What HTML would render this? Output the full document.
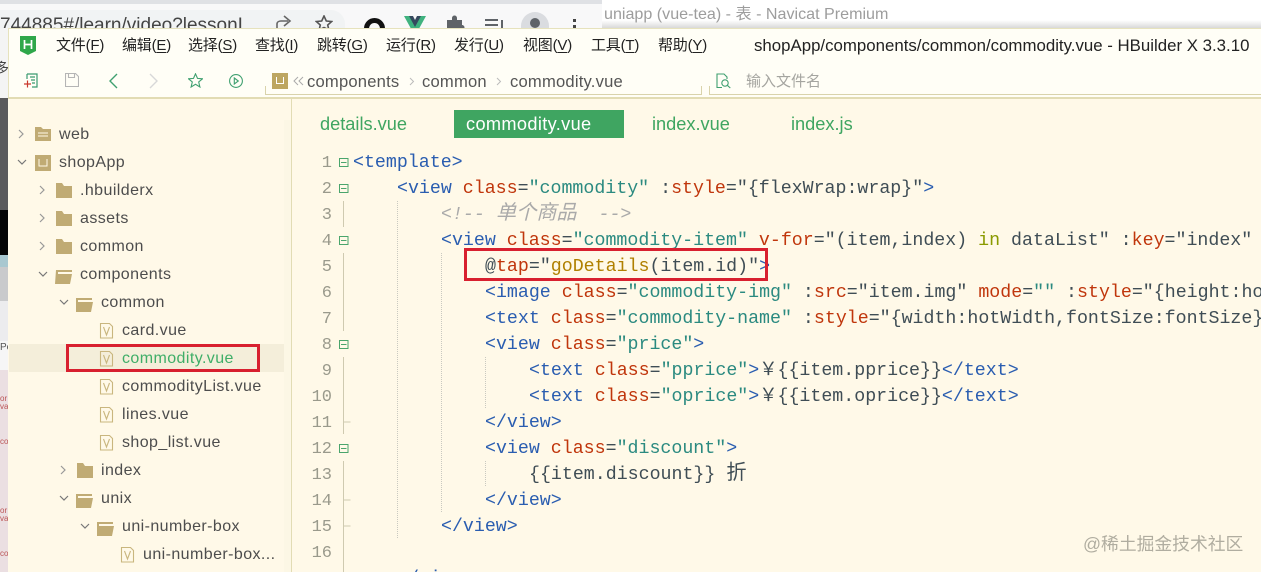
<!DOCTYPE html>
<html><head><meta charset="utf-8">
<style>
html,body{margin:0;padding:0;overflow:hidden;width:1261px;height:572px}
#p{position:relative;width:1261px;height:572px;overflow:hidden;background:#fff9e8;font-family:"Liberation Sans","Noto Sans CJK SC",sans-serif}
.a{position:absolute;white-space:pre}
.r{position:absolute}
.m{position:absolute;top:36px;font-size:15px;line-height:20px;color:#222;white-space:pre;letter-spacing:-.2px}
.m u{text-underline-offset:2px}
.t{position:absolute;font-size:16px;line-height:28px;height:28px;color:#4d4d4d;letter-spacing:.42px;white-space:pre}
.c{position:absolute;font-family:"Liberation Mono","Noto Sans CJK SC",monospace;font-size:18.28px;line-height:26px;height:26px;color:#3f4d55;white-space:pre}
.c b{font-weight:400;font-size:20.2px;line-height:20px}
.n{position:absolute;left:300px;width:32px;text-align:right;font-family:"Liberation Mono",monospace;font-size:17px;line-height:26px;color:#9a9a8c}
.g{color:#2a5db0}.e{color:#c0360c}.s{color:#2b8a80}.o{color:#b08000}.k{color:#8a9a00}.q{color:#aaa;font-style:italic}
svg{position:absolute}
.bc{position:absolute;top:72px;font-size:16.6px;line-height:20px;color:#555;letter-spacing:.2px;white-space:pre}
.tb{position:absolute;top:112px;font-size:18.2px;line-height:24px;color:#3fa561;white-space:pre}
</style></head><body><div id="p">

<!-- background windows -->
<div class="r" style="left:0;top:0;width:602px;height:28px;background:#f8f8f9"></div>
<div class="r" style="left:0;top:0;width:602px;height:4px;background:#dfe1e5"></div>
<div class="r" style="left:0;top:10px;width:345px;height:18px;background:#f1f3f4;border-radius:0 14px 0 0"></div>
<div class="r" style="left:602px;top:0;width:659px;height:28px;background:linear-gradient(#fff 0,#fff 72%,#d9d9d9 100%)"></div>
<div class="a" style="left:0;top:14px;width:260px;height:14px;overflow:hidden;font-size:19px;line-height:24px;color:#444">744885#/learn/video?lessonI</div>
<div class="a" style="left:604px;top:4px;font-size:16.1px;line-height:20px;color:#9d9d9d">uniapp (vue-tea) - 表 - Navicat Premium</div>
<svg style="left:274px;top:15px" width="20" height="13" viewBox="0 0 20 13" fill="none" stroke="#666" stroke-width="1.6"><path d="M3 14V9c0-2 2-3 4-3h7M10 1l6 5-6 5"/></svg>
<svg style="left:315px;top:15px" width="18" height="13" viewBox="0 0 18 13" fill="none" stroke="#555" stroke-width="1.6"><path d="M9 1l2.3 5 5.4.5-4 3.500 1.200 5L9 12.500 4.100 15l1.200-5-4-3.500L6.700 6z"/></svg>
<div class="r" style="left:364px;top:18px;width:21px;height:10px;overflow:hidden"><div style="width:21px;height:21px;border:5px solid #111;border-radius:50%;box-sizing:border-box"></div></div>
<svg style="left:404px;top:16px" width="22" height="12" viewBox="0 0 22 12"><path d="M0 0h6l5 9 5-9h6L11 20z" fill="#3fb27f"/><path d="M5 0h4l2 4 2-4h4l-6 11z" fill="#35495e"/></svg>
<svg style="left:445px;top:15px" width="20" height="13" viewBox="0 0 20 13"><path d="M2 5h5V3a2.500 2.500 0 0 1 5 0v2h5v5a2.500 2.500 0 0 1 0 5v5H2z" fill="#5f6368"/></svg>
<svg style="left:485px;top:18px" width="20" height="10" viewBox="0 0 20 10" stroke="#5f6368" stroke-width="2"><path d="M0 2h13M0 7h13M0 12h9M17 2v11"/></svg>
<div class="r" style="left:521px;top:12px;width:28px;height:16px;border-radius:14px 14px 0 0;background:#dadce0"></div>
<div class="r" style="left:530px;top:18px;width:10px;height:10px;border-radius:5px;background:#5f6368"></div>
<div class="r" style="left:573px;top:19px;width:3px;height:3px;background:#444;box-shadow:0 6px 0 #444"></div>

<!-- left strip -->
<div class="r" style="left:0;top:28px;width:9px;height:70px;background:#f4f4f4"></div>
<div class="a" style="left:0;top:58px;width:9px;overflow:hidden;font-size:14px;line-height:20px;color:#444;direction:rtl">多</div>
<div class="r" style="left:0;top:98px;width:9px;height:112px;background:#5a5a5c"></div>
<div class="r" style="left:0;top:210px;width:9px;height:45px;background:#050505"></div>
<div class="r" style="left:0;top:255px;width:9px;height:12px;background:#a9c8d0"></div>
<div class="r" style="left:0;top:267px;width:9px;height:34px;background:#c9cacc"></div>
<div class="r" style="left:0;top:301px;width:9px;height:40px;background:#ececee"></div>
<div class="r" style="left:0;top:341px;width:9px;height:29px;background:#f6f6f6"></div>
<div class="r" style="left:0;top:370px;width:9px;height:202px;background:#ebdfe2"></div>
<div class="a" style="left:0;top:341px;width:9px;overflow:hidden;font-size:10px;line-height:14px;color:#555">Pe</div>
<div class="a" style="left:0;top:395px;width:9px;overflow:hidden;font-size:8px;line-height:8px;color:#b55">or
va</div>
<div class="a" style="left:0;top:438px;width:9px;overflow:hidden;font-size:8px;line-height:8px;color:#b55">co</div>
<div class="a" style="left:0;top:507px;width:9px;overflow:hidden;font-size:8px;line-height:8px;color:#b55">or
va</div>
<div class="a" style="left:0;top:550px;width:9px;overflow:hidden;font-size:8px;line-height:8px;color:#b55">co</div>

<!-- window -->
<div class="r" style="left:8px;top:28px;width:1253px;height:70px;background:#fffef6;border-top:1px solid #e6e2bd;box-sizing:border-box;border-left:1px solid #e6e2bd"></div>
<div class="r" style="left:8px;top:98px;width:1253px;height:474px;background:#fff9e8"></div>
<div class="r" style="left:8px;top:97px;width:1253px;height:2px;background:#e2dcb4"></div>
<div class="r" style="left:291px;top:99px;width:1px;height:473px;background:#e2dcb4"></div>
<div class="r" style="left:284px;top:120px;width:7px;height:452px;background:#fcf7e5"></div>
<div class="r" style="left:265px;top:94px;width:436px;height:1px;background:#d9d3ab"></div>
<div class="r" style="left:265px;top:86px;width:1px;height:9px;background:#d9d3ab"></div>
<div class="r" style="left:701px;top:86px;width:1px;height:9px;background:#d9d3ab"></div>
<div class="r" style="left:709px;top:94px;width:552px;height:1px;background:#d9d3ab"></div>
<div class="r" style="left:709px;top:86px;width:1px;height:9px;background:#d9d3ab"></div>

<!-- logo -->
<svg style="left:20px;top:36px" width="16" height="20" viewBox="0 0 16 20"><path d="M0 0h16v15l-8 4-8-4z" fill="#2fa74a"/><path d="M4.500 4v9M11.500 4v9M4.500 8.500h7" stroke="#fff" stroke-width="1.700" fill="none"/></svg>

<!-- menu -->
<div class="m" style="left:56px">文件(<u>F</u>)</div>
<div class="m" style="left:122px">编辑(<u>E</u>)</div>
<div class="m" style="left:188px">选择(<u>S</u>)</div>
<div class="m" style="left:255px">查找(<u>I</u>)</div>
<div class="m" style="left:317px">跳转(<u>G</u>)</div>
<div class="m" style="left:386px">运行(<u>R</u>)</div>
<div class="m" style="left:454px">发行(<u>U</u>)</div>
<div class="m" style="left:523px">视图(<u>V</u>)</div>
<div class="m" style="left:591px">工具(<u>T</u>)</div>
<div class="m" style="left:658px">帮助(<u>Y</u>)</div>
<div class="a" style="left:754px;top:36px;font-size:16.83px;line-height:20px;color:#222">shopApp/components/common/commodity.vue - HBuilder X 3.3.10</div>

<!-- toolbar icons -->
<svg style="left:23px;top:73px" width="16" height="16" viewBox="0 0 16 16" fill="none" stroke="#3a9a70" stroke-width="1.200"><path d="M4 1h10v13H9M4 1v5M7 4h5M8 7h4M9 10h3"/><path d="M1 11h7M4.500 7.500v7" stroke="#c9382c"/></svg>
<svg style="left:65px;top:73px" width="14" height="14" viewBox="0 0 14 14" fill="none" stroke="#b5b5b5" stroke-width="1.100"><path d="M.5.500h10l3 3v10H.5zM3.500.5v4h6v-4"/></svg>
<svg style="left:108px;top:73px" width="10" height="16" viewBox="0 0 10 16" fill="none" stroke="#3fa070" stroke-width="1.400"><path d="M9 1L2 8l7 7"/></svg>
<svg style="left:149px;top:73px" width="10" height="16" viewBox="0 0 10 16" fill="none" stroke="#d8d8d8" stroke-width="1.400"><path d="M1 1l7 7-7 7"/></svg>
<svg style="left:188px;top:73px" width="15" height="15" viewBox="0 0 15 15" fill="none" stroke="#3fa070" stroke-width="1.100"><path d="M7.500 .8l2 4.600 5 .4-3.800 3.200 1.200 5-4.400-2.700L3.100 14l1.200-5L.5 5.800l5-.4z"/></svg>
<svg style="left:229px;top:74px" width="14" height="14" viewBox="0 0 14 14" fill="none" stroke="#3fa070" stroke-width="1.100"><circle cx="7" cy="7" r="6.400"/><path d="M5.300 4l4 3-4 3z"/></svg>

<!-- breadcrumb -->
<div class="r" style="left:272px;top:73px;width:16px;height:16px;background:#bda661"></div>
<div class="r" style="left:276px;top:77px;width:8px;height:7px;border:1px solid #fff;border-top:0;box-sizing:border-box"></div>
<svg style="left:293px;top:76px" width="12" height="10" viewBox="0 0 12 10" fill="none" stroke="#aaa" stroke-width="1"><path d="M5 1L1 5l4 4M10 1L6 5l4 4"/></svg>
<div class="bc" style="left:307px">components</div>
<svg style="left:409px;top:77px" width="6" height="9" viewBox="0 0 6 9" fill="none" stroke="#bbb"><path d="M1 1l3.500 3.500L1 8"/></svg>
<div class="bc" style="left:422px">common</div>
<svg style="left:496px;top:77px" width="6" height="9" viewBox="0 0 6 9" fill="none" stroke="#bbb"><path d="M1 1l3.500 3.500L1 8"/></svg>
<div class="bc" style="left:510px">commodity.vue</div>
<svg style="left:716px;top:73px" width="16" height="16" viewBox="0 0 16 16" fill="none" stroke="#3fa070" stroke-width="1.100"><path d="M6 14.500H1V1h7l3 3v2"/><circle cx="9" cy="10" r="3.200"/><path d="M11.300 12.300l3 2.700"/></svg>
<div class="a" style="left:746px;top:72px;font-size:15px;line-height:20px;color:#a5a5a0">输入文件名</div>

<!-- sidebar selection -->
<div class="r" style="left:9px;top:344px;width:275px;height:28px;background:#f4eeda"></div>

<!-- tree arrows -->
<svg style="left:0;top:0" width="291" height="572" viewBox="0 0 291 572" fill="none" stroke="#777" stroke-width="1.200">
<path d="M19 130l4 4-4 4M40 186l4 4-4 4M40 214l4 4-4 4M40 242l4 4-4 4M61 466l4 4-4 4" stroke="#999"/>
<path d="M18 160l4 4 4-4M39 272l4 4 4-4M60 300l4 4 4-4M60 496l4 4 4-4M81 524l4 4 4-4"/>
</svg>
<!-- tree icons -->
<svg style="left:0;top:0" width="291" height="572" viewBox="0 0 291 572">
<g fill="#c0ab74">
<path d="M35 127h6l2 2h8v12H35z"/>
<path d="M35 155h16v16H35z"/>
<path d="M56 183h6l2 3h8v12H56zM56 211h6l2 3h8v12H56zM56 239h6l2 3h8v12H56zM77 463h6l2 3h8v12H77z"/>
<path d="M56 270h16v2H58v2h14l-2 10H55zM76 298h16v2H78v2h15l-2 10H76zM76 494h16v2H78v2h15l-2 10H76zM97 522h16v2H99v2h15l-2 10H97z"/>
</g>
<path d="M38 133h10M38 136h10" stroke="#fff9e8"/>
<path d="M39 159v7h8v-7" stroke="#fff9e8" fill="none"/>
<g fill="none" stroke="#c9b67e" stroke-width="1.100">
<path d="M100.500 323.500h9l3 3v11.500h-12zM103.500 327l3 8 3-8M100.500 351.500h9l3 3v11.500h-12zM103.500 355l3 8 3-8M100.500 379.500h9l3 3v11.500h-12zM103.500 383l3 8 3-8M100.500 407.500h9l3 3v11.500h-12zM103.500 411l3 8 3-8M100.500 435.500h9l3 3v11.500h-12zM103.500 439l3 8 3-8M121.500 547.500h9l3 3v11.500h-12zM124.500 551l3 8 3-8"/>
</g>
</svg>

<!-- tree text -->
<div class="t" style="left:59px;top:121px">web</div>
<div class="t" style="left:59px;top:149px">shopApp</div>
<div class="t" style="left:80px;top:177px">.hbuilderx</div>
<div class="t" style="left:80px;top:205px">assets</div>
<div class="t" style="left:80px;top:233px">common</div>
<div class="t" style="left:80px;top:261px">components</div>
<div class="t" style="left:101px;top:289px">common</div>
<div class="t" style="left:122px;top:317px">card.vue</div>
<div class="t" style="left:122px;top:345px;color:#3fae68">commodity.vue</div>
<div class="t" style="left:122px;top:373px">commodityList.vue</div>
<div class="t" style="left:122px;top:401px">lines.vue</div>
<div class="t" style="left:122px;top:429px">shop_list.vue</div>
<div class="t" style="left:101px;top:457px">index</div>
<div class="t" style="left:101px;top:485px">unix</div>
<div class="t" style="left:122px;top:513px">uni-number-box</div>
<div class="t" style="left:143px;top:541px">uni-number-box...</div>

<div class="r" style="left:66px;top:344px;width:194px;height:28px;border:3px solid #d8202f;box-sizing:border-box"></div>

<!-- tabs -->
<div class="r" style="left:454px;top:110px;width:170px;height:28px;background:#3fa561"></div>
<div class="tb" style="left:320px">details.vue</div>
<div class="tb" style="left:466px;color:#fff;letter-spacing:.35px">commodity.vue</div>
<div class="tb" style="left:652px">index.vue</div>
<div class="tb" style="left:791px">index.js</div>

<!-- guides -->
<svg style="left:0;top:0" width="1261" height="572" viewBox="0 0 1261 572" fill="none">
<path d="M343.500 201v26M343.500 253v78M343.500 357v77M343.500 461v111M343.500 422h7M343.500 500h7M343.500 526h7" stroke="#cfcab0"/>
<g stroke="#c9c9c0" stroke-dasharray="1 1">
<path d="M397.500 201v338M441.500 253v260M485.500 357v52M485.500 461v26"/>
</g>
<g stroke="#4aa56c" fill="#fff9e8">
<rect x="339.500" y="158.500" width="8.500" height="8"/><rect x="339.500" y="184.500" width="8.500" height="8"/><rect x="339.500" y="236.500" width="8.500" height="8"/><rect x="339.500" y="340.500" width="8.500" height="8"/><rect x="339.500" y="444.500" width="8.500" height="8"/>
<path d="M341 162.500h5.500M341 188.500h5.500M341 240.500h5.500M341 344.500h5.500M341 448.500h5.500"/>
</g>
</svg>

<!-- line numbers -->
<div class="n" style="top:151px">1</div><div class="n" style="top:177px">2</div><div class="n" style="top:203px">3</div><div class="n" style="top:229px">4</div><div class="n" style="top:255px">5</div><div class="n" style="top:281px">6</div><div class="n" style="top:307px">7</div><div class="n" style="top:333px">8</div><div class="n" style="top:359px">9</div><div class="n" style="top:385px">10</div><div class="n" style="top:411px">11</div><div class="n" style="top:437px">12</div><div class="n" style="top:463px">13</div><div class="n" style="top:489px">14</div><div class="n" style="top:515px">15</div><div class="n" style="top:541px">16</div>

<!-- code -->
<div class="c" style="left:353px;top:150px"><span class="g">&lt;template&gt;</span></div>
<div class="c" style="left:397px;top:176px"><span class="g">&lt;view</span> <span class="e">class</span>=<span class="s">"commodity"</span> :<span class="e">style</span>="{flexWrap:wrap}"<span class="g">&gt;</span></div>
<div class="c q" style="left:441px;top:202px;color:#aaa">&lt;!-- <b>单个商品</b>  --&gt;</div>
<div class="c" style="left:441px;top:228px;width:820px;overflow:hidden"><span class="g">&lt;view</span> <span class="e">class</span>=<span class="s">"commodity-item"</span> <span class="e">v-for</span>="(item,index) <span class="k">in</span> dataList" :<span class="e">key</span>="index"</div>
<div class="c" style="left:485px;top:254px">@<span class="e">tap</span>="<span class="o">goDetails</span>(item.id)"<span class="g">&gt;</span></div>
<div class="c" style="left:485px;top:280px;width:776px;overflow:hidden"><span class="g">&lt;image</span> <span class="e">class</span>=<span class="s">"commodity-img"</span> :<span class="e">src</span>="item.img" <span class="e">mode</span>=<span class="s">""</span> :<span class="e">style</span>="{height:hotHeight}"</div>
<div class="c" style="left:485px;top:306px;width:776px;overflow:hidden"><span class="g">&lt;text</span> <span class="e">class</span>=<span class="s">"commodity-name"</span> :<span class="e">style</span>="{width:hotWidth,fontSize:fontSize}"</div>
<div class="c" style="left:485px;top:332px"><span class="g">&lt;view</span> <span class="e">class</span>=<span class="s">"price"</span><span class="g">&gt;</span></div>
<div class="c" style="left:529px;top:358px"><span class="g">&lt;text</span> <span class="e">class</span>=<span class="s">"pprice"</span><span class="g">&gt;</span>￥{{item.pprice}}<span class="g">&lt;/text&gt;</span></div>
<div class="c" style="left:529px;top:384px"><span class="g">&lt;text</span> <span class="e">class</span>=<span class="s">"oprice"</span><span class="g">&gt;</span>￥{{item.oprice}}<span class="g">&lt;/text&gt;</span></div>
<div class="c" style="left:485px;top:410px"><span class="g">&lt;/view&gt;</span></div>
<div class="c" style="left:485px;top:436px"><span class="g">&lt;view</span> <span class="e">class</span>=<span class="s">"discount"</span><span class="g">&gt;</span></div>
<div class="c" style="left:529px;top:462px">{{item.discount}} <b>折</b></div>
<div class="c" style="left:485px;top:488px"><span class="g">&lt;/view&gt;</span></div>
<div class="c" style="left:441px;top:514px"><span class="g">&lt;/view&gt;</span></div>
<div class="c" style="left:397px;top:566px;height:6px;overflow:hidden"><span class="g">&lt;/view&gt;</span></div>

<div class="r" style="left:464px;top:248px;width:304px;height:33px;border:3px solid #d8202f;box-sizing:border-box"></div>

<div class="a" style="left:1083px;top:533px;font-size:17.8px;line-height:22px;color:#b0ada0">@稀土掘金技术社区</div>
</div></body></html>
